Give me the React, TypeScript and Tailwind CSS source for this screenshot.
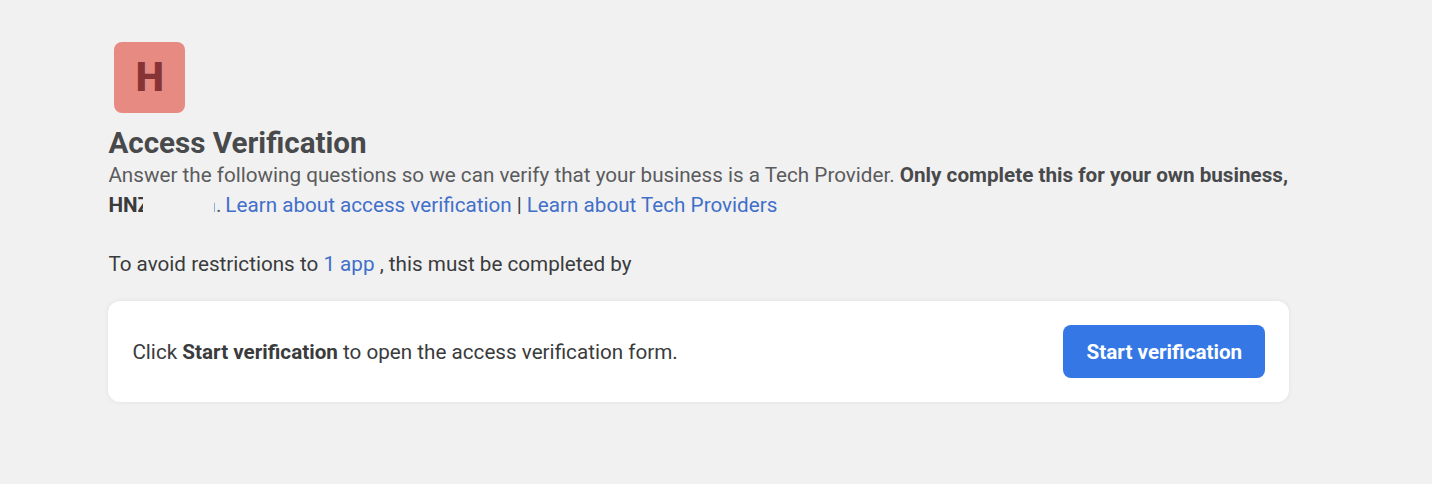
import React from "react";

const LINKS: string[] = ["Learn about access verification", "Learn about Tech Providers"];

const BusinessAvatar = () => (
    <div className="ml-[6px] flex h-[71px] w-[71px] items-center justify-center rounded-lg bg-[#e78a82]">
        <span className="text-[40px] font-black leading-none text-[#873436]">H</span>
    </div>
);

const App = () => {
    return (
        <div className="h-[484px] w-full bg-[#f1f1f1] pl-[108.4px] pt-[42px] font-[Roboto,sans-serif] text-[20.66px] leading-[29.5px] text-[#3a3b3d]">
            <BusinessAvatar />
            <h1 className="mt-[12px] whitespace-nowrap text-[29.6px] font-bold leading-[36px] text-[#48494b]">
                <span>Access Verification</span>
            </h1>
            <p className="whitespace-nowrap">
                <span className="text-[#5a5b5d]">
                    Answer the following questions so we can verify that your business is a Tech Provider.
                </span>{" "}
                <b className="text-[#48494b]">Only complete this for your own business,</b>
            </p>
            <div className="flex whitespace-nowrap">
                {/* business name, middle part hidden */}
                <b className="w-[34.5px] overflow-hidden">HNZ</b>
                <span className="ml-[71px] flex w-[2px] justify-end overflow-hidden text-[#77787a]">n</span>
                <span className="text-[#5a5b5d]">.</span>
                <a className="ml-[4px] text-[#426fca]">{LINKS[0]}</a>
                <span className="mx-[5px]">|</span>
                <a className="text-[#426fca]">{LINKS[1]}</a>
            </div>
            <p className="mt-[29.5px] whitespace-nowrap">
                To avoid restrictions to <a className="text-[#426fca]">1 app</a> , this must be completed by
            </p>
            <div className="mt-[22px] flex h-[101px] w-[1181px] items-center justify-between rounded-xl bg-white px-6 shadow-[0_0_5px_rgba(0,0,0,0.07)]">
                <p className="pt-[3px]">
                    Click <b>Start verification</b> to open the access verification form.
                </p>
                <button className="h-[53px] w-[202px] whitespace-nowrap rounded-lg bg-[#3578e5] pt-[3px] font-bold text-white">
                    Start verification
                </button>
            </div>
        </div>
    );
};

export default App;
